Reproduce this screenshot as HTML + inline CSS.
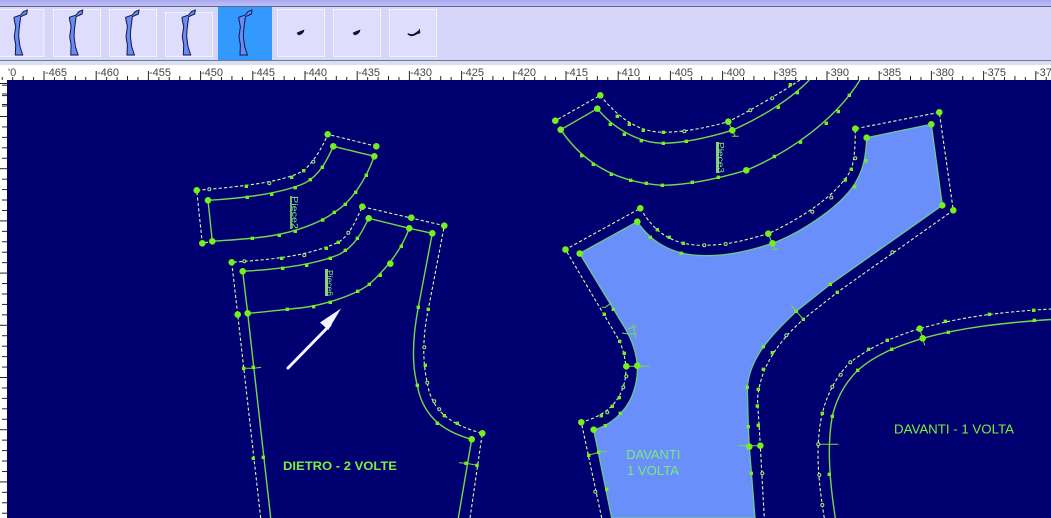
<!DOCTYPE html>
<html><head><meta charset="utf-8"><style>
html,body{margin:0;padding:0;background:#000070;width:1051px;height:518px;overflow:hidden}
svg{display:block}
.in{fill:none;stroke:#74d84c;stroke-width:1.4;stroke-linejoin:round}
.out{fill:none;stroke:#d4ffa8;stroke-width:1.1;stroke-dasharray:3.2 2.2}
.big{fill:none;stroke:#74f01c;stroke-width:6.6;stroke-linecap:round}
.sq{fill:none;stroke:#74f01c;stroke-width:3.4;stroke-linecap:square}
.op{fill:#000070;stroke:#a0f070;stroke-width:1}
.nt{fill:none;stroke:#74d84c;stroke-width:1}
.r{font:11px "Liberation Sans",sans-serif;fill:#444}
.lab{font-family:"Liberation Sans",sans-serif;fill:#7cf03c}
.pc{font:8px "Liberation Sans",sans-serif;fill:#90e870}
</style></head><body>
<svg width="1051" height="518" viewBox="0 0 1051 518" xmlns="http://www.w3.org/2000/svg">
<defs>
<linearGradient id="g" x1="0" y1="0" x2="0" y2="1"><stop offset="0" stop-color="#a8a8f0"/><stop offset="1" stop-color="#c4c4fc"/></linearGradient>
<pattern id="tx" x="43.5" y="65" width="52.2" height="15" patternUnits="userSpaceOnUse">
<path d="M.5 6v9M10.94 12v3M21.38 12v3M31.82 11v4M42.26 12v3" stroke="#222" stroke-width="1" fill="none"/></pattern>
<pattern id="ty" x="0" y="116" width="7" height="52.2" patternUnits="userSpaceOnUse">
<path d="M0 .5h7M2 10.94h5M2 21.38h5M2 31.82h5M2 42.26h5" stroke="#222" stroke-width="1" fill="none"/></pattern>
<polygon id="t" points="27.3,10 26.7,14 20.7,16.7 20,22 19,30 18.7,36.7 20,46.7 22.7,55 15.3,55 15.7,45 14.3,36.7 15.7,26.7 14.3,20 14,17.3 20.7,15 23.3,11.7" fill="#6a8cf0" stroke="#141450" stroke-width="1"/>
<path id="front" d="M579.7 253.5L637.3 221.7C650 240 670 256 706.7 255.7C730 255.7 752 250 772.5 243.3C800 233 845 205 858 178C864 166 866 155 866.7 137.7L931.3 124.3L942.3 205.3L830.3 284.3L796.3 311.3C775 332 750 355 747.3 387.3L748.3 426.7L749.3 446.7L755 518L611.7 518L593.7 429.7C610 426 625 412 631.7 396.7C636 386 638 376 637.3 365.7C636.5 352 632 340 625 328Z"/>
</defs>

<rect width="1051" height="7" fill="url(#g)"/>
<rect y="6" width="1051" height="1" fill="#666680"/>
<rect y="7" width="1051" height="53" fill="#d6d6fa"/>
<rect y="60" width="1051" height="1" fill="#777790"/>
<rect y="61" width="1051" height="4" fill="#d8e0f4"/>
<rect y="65" width="1051" height="15" fill="#fff"/>
<rect y="65" width="1051" height="15" fill="url(#tx)"/>

<g fill="#dedefc" stroke="#f2f2ff">
<rect x="-3" y="9.500" width="47" height="47"/>
<rect x="53.500" y="9.500" width="47" height="47"/>
<rect x="109.500" y="9.500" width="47" height="47"/>
<rect x="165.500" y="12.500" width="47" height="44"/>
<rect x="277.500" y="9.500" width="47" height="47"/>
<rect x="333.500" y="9.500" width="47" height="47"/>
<rect x="389.500" y="9.500" width="47" height="47"/>
</g>
<rect x="218" y="7" width="54" height="53" fill="#3399ff"/>
<use href="#t"/>
<use href="#t" x="55.400"/>
<use href="#t" x="111.700"/>
<use href="#t" x="168"/>
<use href="#t" x="224.700"/>
<g fill="#101040" stroke="#101040" stroke-width=".6">
<path d="M297 33l3-1.500 4-1.500-.5 2-2 2-3 1z"/>
<path d="M353 33l3-1.500 4-1.500-.5 2-2 2-3 1z"/>
<path d="M408 33.500l3 1 3-.5 3-2 2-1.500 .5-1.500 .5 4-3 1-3 1.500-3 .5-3-1.500z"/>
</g>

<g class="r">
<text x="8" y="76">'0</text>
<text x="45" y="76">-465</text><text x="97" y="76">-460</text><text x="149" y="76">-455</text><text x="201" y="76">-450</text><text x="253" y="76">-445</text><text x="305" y="76">-440</text><text x="358" y="76">-435</text><text x="410" y="76">-430</text><text x="462" y="76">-425</text><text x="514" y="76">-420</text><text x="566" y="76">-415</text><text x="618" y="76">-410</text><text x="671" y="76">-405</text><text x="723" y="76">-400</text><text x="775" y="76">-395</text><text x="827" y="76">-390</text><text x="879" y="76">-385</text><text x="932" y="76">-380</text><text x="984" y="76">-375</text><text x="1036" y="76">-370</text>
</g>

<rect x="0" y="80" width="7" height="438" fill="#fff"/>
<rect x="0" y="80" width="7" height="438" fill="url(#ty)"/>
<path d="M0 83.500h7M2 94h5M2 104.500h5" stroke="#222"/>
<rect x="7" y="80" width="1044" height="438" fill="#000070"/>

<!-- blue front piece -->
<use href="#front" fill="#6a8ffb" stroke="#6cc890" stroke-width="1.300"/>

<!-- inner lines -->
<path class="in" d="M208 200.300C250 198 285 192 305 183C320 175 327 160 333.300 146.300L374.300 156.300C365 182 350 203 334.300 212.300C320 223 295 232 270 236C250 239 230 240 212.300 241.300Z"/>
<path class="in" d="M270.700 518L247.700 313.300L242.700 271.300C285 269 320 263 340 254C355 246 362 232 368.700 218.300L409.300 228.300L432.300 233.300L418.300 307.300C413 335 411 362 417.300 385.300C422 412 438 430 471.700 439.300L458.300 518"/>
<path class="in" d="M409.300 228.300C402 248 390 265 369.300 284.300C355 295 325 305 300 308C280 310 265 312 247.700 313.300"/>
<path class="in" d="M809.300 80C790 100 760 118 732.300 130.300C710 137 685 143 663.300 143.300C640 143 615 130 597.300 108.700L560.700 129.700C580 158 610 182 662.300 185.300C690 185 720 178 746.300 170.300C790 152 835 120 860 80"/>
<path class="in" d="M835.300 518C831 490 826 450 832.300 416.300C838 392 850 378 857.700 370.300C875 355 895 347 922.700 338.300C960 328 1000 323 1051 319.500"/>

<!-- dashed outlines -->
<path class="out" d="M376.300 146.300L327.700 134.300C322 148 315 160 303.700 170.700C285 181 250 186 196.700 190.300L202.300 243.300L212.300 241.300"/>
<path class="out" d="M260.700 518L237.700 314.500L231.700 262.300C270 259.500 305 257 338.300 242.300C350 235 356 220 362.300 206.700L444.300 225.700L428.300 309.300C423 335 422 360 427.300 382.700C431 408 447 424 482.300 433.300L470 518"/>
<path class="out" d="M800 80C780 93 755 108 728.300 121.700C705 128 685 132 663.300 132.300C640 132 620 120 600.300 95.300L555.300 120.700"/>
<path class="out" d="M601.700 518L581.300 422.300C600 417 615 408 622 390C628 375 627 360 619.700 341.300L565.500 249.500L640.300 208.300C650 224 665 246 704.300 245.300C730 245 745 240 768.300 233.700C800 219 838 195 851.300 169.300C854 160 855.300 150 855.300 128.700L939.300 112.300L953.300 210.300L837.300 292.300L803.300 319.300C785 336 760 362 757.500 400L760.300 445.700L764.300 518"/>
<path class="out" d="M824.300 518C818 480 815 445 822.300 413.300C828 390 840 372 850.300 362.300C870 347 895 336 919.700 328.700C960 317 1000 312 1051 309"/>

<!-- notches -->
<path class="nt" d="M243.700 368.300h9.600l8-1M477 465.300l-11-2-7-.5M626.300 366.300h11h12M760.300 445.700h-11l-12 0M818.300 444.300h10h10M728.300 121.700l4 8.600 3 6h-3.500h7M768.300 233.700l4 9.600 3 6h-3.500h7M919.700 328.700l3 9.600 2 7M803.300 319.300l-7-8-5-6M588.700 455.300l10-3 8-1M622 333l6 1 8 0M628 329l9-3M636 338l-3-14M601.700 307.300l4 0 6-5"/>

<!-- big points -->
<path class="big" d="M196.700 190.300h0M208 200.300h0M327.700 134.300h0M333.300 146.300h0M376.300 146.300h0M374.300 156.300h0M202.300 243.300h0M212.300 241.300h0M362.300 206.700h0M368.700 218.300h0M411.300 217.700h0M409.300 228.300h0M444.300 225.700h0M432.300 233.300h0M231.700 262.300h0M242.700 271.300h0M237.700 314.500h0M247.700 313.300h0M390.300 263.700h0M482.300 433.300h0M471.700 439.300h0M555.300 120.700h0M560.700 129.700h0M600.300 95.300h0M597.300 108.700h0M728.300 121.700h0M732.300 130.300h0M746.300 170.300h0M565.500 249.500h0M579.700 253.500h0M640.300 208.300h0M637.300 221.700h0M768.300 233.700h0M772.500 243.300h0M855.300 128.700h0M866.700 137.700h0M939.300 112.300h0M931.300 124.300h0M953.300 210.300h0M942.300 205.300h0M626.300 366.300h0M637.300 365.700h0M581.300 422.300h0M593.700 429.700h0M749.300 446.700h0M760.300 445.700h0M919.700 328.700h0M922.700 338.300h0"/>

<!-- small squares -->
<path class="sq" d="M247.300 197.300h0M271.700 194.300h0M295.300 187.700h0M310.300 179.700h0M322.300 167.300h0M366.300 175.300h0M355.700 192.300h0M345.300 204.300h0M334.300 212.300h0M322.700 220h0M295.300 231.300h0M279.300 235.300h0M252.300 238.300h0M246.300 186.300h0M291.700 177.300h0M303.700 170.700h0M282.700 268.300h0M306.700 265.300h0M330.300 258.300h0M345.300 250.300h0M357.300 238.300h0M401.300 246.300h0M380.300 275.300h0M369.300 284.300h0M357.700 291.300h0M330.300 302.300h0M313.700 306.700h0M287.300 309.300h0M253.300 367.300h0M263.300 457.300h0M418.300 307.300h0M417.300 385.300h0M437.300 423.300h0M466 463.300h0M281.700 258.300h0M326.300 248.300h0M338.300 242.300h0M428.300 309.300h0M425.300 365.300h0M444.300 415.700h0M457.300 423.300h0M477 465.300h0M243.700 368.300h0M253.300 458.300h0M778.300 107.300h0M797.300 92.700h0M686.300 141.300h0M663.300 143.300h0M641.300 140.700h0M624.300 134.300h0M610.300 124.300h0M581.700 155.700h0M593.300 164.300h0M611.300 174.300h0M630.700 180.300h0M646.300 183.300h0M662.300 185.300h0M692.300 182.300h0M718.300 177.300h0M774.300 156.500h0M800.500 142.200h0M826.300 123.300h0M838.300 111.500h0M849.300 95.300h0M790.300 84.700h0M663.300 132.300h0M643.300 130.300h0M629.300 124.300h0M617.300 116.300h0M650.300 237.300h0M681.300 253.300h0M657.300 229.700h0M669.300 237.300h0M683.300 243.300h0M854.700 186.700h0M865.700 160.700h0M845.300 180h0M851.300 169.300h0M830.300 284.300h0M796.300 311.300h0M837.300 292.300h0M803.300 319.300h0M763.300 346.700h0M747.300 387.300h0M748.300 426.700h0M751.300 473.300h0M772.300 352.700h0M763.300 369.300h0M758.300 389.300h0M757.300 406h0M758.300 425.300h0M613.300 309.300h0M604.300 314.300h0M619.700 341.300h0M624.300 353.300h0M619.300 397.700h0M612.300 406.300h0M601.300 415.700h0M605.300 425.700h0M620.300 413.300h0M598.700 452.300h0M588.700 455.300h0M606.700 489.300h0M829.300 474.300h0M832.300 416.300h0M857.700 370.300h0M891.700 349.300h0M948.300 332.300h0M1034.300 320.300h0M822.300 413.300h0M868.700 349.300h0M887.300 340.300h0M945.300 321.300h0M989.300 314.300h0M1033.700 310.300h0"/>

<!-- open points -->
<g class="op">
<circle cx="209.300" cy="189.300" r="1.500"/><circle cx="269.300" cy="183.300" r="1.500"/><circle cx="313.300" cy="161.700" r="1.500"/>
<circle cx="244.300" cy="261.300" r="1.500"/><circle cx="304.300" cy="255.300" r="1.500"/><circle cx="348.300" cy="232.700" r="1.500"/>
<circle cx="424.300" cy="347.300" r="1.500"/><circle cx="427.300" cy="382.700" r="1.500"/><circle cx="434.300" cy="401.300" r="1.500"/><circle cx="439.300" cy="409.300" r="1.500"/>
<circle cx="684.300" cy="131.300" r="1.500"/><circle cx="750.300" cy="110.300" r="1.500"/><circle cx="772.300" cy="98.300" r="1.500"/>
<circle cx="704.300" cy="245.300" r="1.500"/><circle cx="725.700" cy="244" r="1.500"/><circle cx="812.300" cy="211.700" r="1.500"/><circle cx="831.300" cy="197.500" r="1.500"/><circle cx="855.300" cy="158.300" r="1.500"/><circle cx="892.300" cy="252.300" r="1.500"/><circle cx="786.300" cy="335.300" r="1.500"/><circle cx="762.300" cy="473.300" r="1.500"/>
<circle cx="626.300" cy="376.300" r="1.500"/><circle cx="623.300" cy="387.300" r="1.500"/><circle cx="607.300" cy="412.300" r="1.500"/><circle cx="595.300" cy="491.700" r="1.500"/>
<circle cx="822.300" cy="505" r="1.500"/><circle cx="819.300" cy="475" r="1.500"/><circle cx="818.300" cy="444.300" r="1.500"/><circle cx="832.300" cy="386.700" r="1.500"/><circle cx="840.700" cy="374.700" r="1.500"/><circle cx="850.300" cy="362.300" r="1.500"/>
</g>

<!-- piece labels -->
<rect x="290" y="196" width="2" height="33" fill="#70b860"/>
<text class="pc" transform="translate(292,196) rotate(90)" textLength="33" lengthAdjust="spacingAndGlyphs">Piece2</text>
<rect x="325" y="269" width="3" height="27" fill="#88d078"/>
<text class="pc" transform="translate(327,270) rotate(90)" textLength="26" lengthAdjust="spacingAndGlyphs">Piece6</text>
<rect x="716" y="142" width="3" height="31" fill="#88d078"/>
<text class="pc" transform="translate(718,142) rotate(90)" textLength="31" lengthAdjust="spacingAndGlyphs">Piece3</text>

<!-- arrow -->
<path d="M288 368L330 325" stroke="#f4f4ff" stroke-width="3" stroke-linecap="round" fill="none"/>
<polygon points="341,308.500 320,322.500 328.300,330" fill="#f4f4ff"/>

<!-- labels -->
<text class="lab" x="283" y="470" font-size="12" font-weight="bold" textLength="114" lengthAdjust="spacingAndGlyphs">DIETRO - 2 VOLTE</text>
<text class="lab" x="626.300" y="459" font-size="13" style="fill:#7ce87c" textLength="54" lengthAdjust="spacingAndGlyphs">DAVANTI</text>
<text class="lab" x="627" y="475" font-size="13" style="fill:#7ce87c" textLength="52" lengthAdjust="spacingAndGlyphs">1 VOLTA</text>
<text class="lab" x="894" y="433.500" font-size="13" textLength="120" lengthAdjust="spacingAndGlyphs">DAVANTI - 1 VOLTA</text>
</svg>
</body></html>
